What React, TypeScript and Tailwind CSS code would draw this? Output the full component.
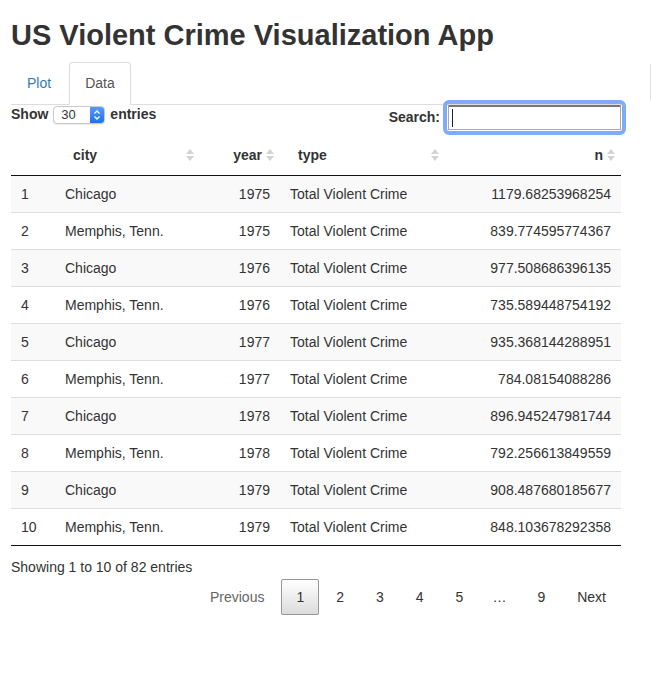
import React from 'react';

const rows = [
  ['1', 'Chicago', '1975', 'Total Violent Crime', '1179.68253968254'],
  ['2', 'Memphis, Tenn.', '1975', 'Total Violent Crime', '839.774595774367'],
  ['3', 'Chicago', '1976', 'Total Violent Crime', '977.508686396135'],
  ['4', 'Memphis, Tenn.', '1976', 'Total Violent Crime', '735.589448754192'],
  ['5', 'Chicago', '1977', 'Total Violent Crime', '935.368144288951'],
  ['6', 'Memphis, Tenn.', '1977', 'Total Violent Crime', '784.08154088286'],
  ['7', 'Chicago', '1978', 'Total Violent Crime', '896.945247981744'],
  ['8', 'Memphis, Tenn.', '1978', 'Total Violent Crime', '792.256613849559'],
  ['9', 'Chicago', '1979', 'Total Violent Crime', '908.487680185677'],
  ['10', 'Memphis, Tenn.', '1979', 'Total Violent Crime', '848.103678292358'],
];

function SortIcon() {
  return (
    <svg className="absolute right-[6px] top-[13px]" width="8" height="14" viewBox="0 0 8 14">
      <path d="M0 6 L4 1 L8 6 Z" fill="#d4d4d4" />
      <path d="M0 8 L4 13 L8 8 Z" fill="#d4d4d4" />
    </svg>
  );
}

function PageButton({ label, current }: { label: string; current?: boolean }) {
  return (
    <span
      className={
        current
          ? 'ml-[2px] px-[14px] py-[7px] leading-[20px] border border-[#979797] rounded-[2px] bg-gradient-to-b from-white to-[#dcdcdc] text-[#333]'
          : 'ml-[2px] px-[14px] py-[7px] leading-[20px] border border-transparent text-[#333]'
      }
    >
      {label}
    </span>
  );
}

export default function App() {
  return (
    <div className="relative min-h-[686px] bg-white text-[#333] text-[14px] font-['Liberation_Sans',Arial,sans-serif]">
      <div className="absolute left-[650px] top-[64px] h-[36px] w-px bg-[#e3e3e3]" />
      <div className="ml-[11px] w-[610px]">
        <h1 className="pt-[19px] text-[29px] font-bold leading-[33px] text-[#333]">
          US Violent Crime Visualization App
        </h1>

        {/* tabs */}
        <ul className="mt-[10px] flex border-b border-[#ddd]">
          <li className="mr-[2px] border border-transparent px-[15px] py-[10px] leading-[20px] text-[#337ab7]">Plot</li>
          <li className="-mb-px rounded-t-[4px] border border-[#ddd] border-b-white bg-white px-[15px] py-[10px] leading-[20px] text-[#555]">
            Data
          </li>
        </ul>

        {/* length + filter */}
        <div className="flex h-[25px] items-center justify-between">
          <div className="flex items-center font-bold text-[14px] -mt-[6px]">
            <span>Show</span>
            <div className="mx-[5px] flex h-[18px] w-[52px] items-center rounded-[4px] border border-[#c9c9c9] bg-white shadow-[0_1px_1px_rgba(0,0,0,0.08)] overflow-hidden">
              <span className="flex-1 pl-[7px] text-[13px] font-normal leading-[16px]">30</span>
              <span className="flex h-full w-[14px] items-center justify-center bg-gradient-to-b from-[#5599fa] to-[#1f6fef]">
                <svg width="8" height="12" viewBox="0 0 8 12">
                  <path d="M1.5 4.5 L4 2 L6.5 4.5" stroke="white" strokeWidth="1.3" fill="none" />
                  <path d="M1.5 7.5 L4 10 L6.5 7.5" stroke="white" strokeWidth="1.3" fill="none" />
                </svg>
              </span>
            </div>
            <span>entries</span>
          </div>
          <div className="flex items-center font-bold">
            <span className="mr-[8px]">Search:</span>
            <div className="relative h-[25px] w-[173px] rounded-[1px] border border-[#a9a9a9] border-t-[#777] border-t-2 bg-white outline outline-4 outline-offset-1 outline-[#80abf7]">
              <div className="absolute left-[3px] top-[2px] h-[18px] w-px bg-[#222]" />
            </div>
          </div>
        </div>

        {/* table */}
        <table className="mt-[5px] w-[610px] table-fixed border-collapse border-b border-[#111]">
          <colgroup>
            <col className="w-[44px]" />
            <col className="w-[145px]" />
            <col className="w-[80px]" />
            <col className="w-[165px]" />
            <col className="w-[176px]" />
          </colgroup>
          <thead>
            <tr className="border-b border-[#111]">
              <th className="py-[10px] pl-[10px] pr-[18px] leading-[20px]" />
              <th className="relative py-[10px] pl-[18px] pr-[18px] text-left font-bold leading-[20px]">
                city
                <SortIcon />
              </th>
              <th className="relative py-[10px] pl-[10px] pr-[18px] text-right font-bold leading-[20px]">
                year
                <SortIcon />
              </th>
              <th className="relative py-[10px] pl-[18px] pr-[18px] text-left font-bold leading-[20px]">
                type
                <SortIcon />
              </th>
              <th className="relative py-[10px] pl-[10px] pr-[18px] text-right font-bold leading-[20px]">
                n
                <SortIcon />
              </th>
            </tr>
          </thead>
          <tbody>
            {rows.map((r, i) => (
              <tr key={r[0]} className={i % 2 === 0 ? 'bg-[#f9f9f9]' : 'bg-white'}>
                <td className={(i > 0 ? 'border-t border-[#ddd] ' : '') + 'px-[10px] py-[8px] leading-[20px]'}>{r[0]}</td>
                <td className={(i > 0 ? 'border-t border-[#ddd] ' : '') + 'px-[10px] py-[8px] leading-[20px]'}>{r[1]}</td>
                <td className={(i > 0 ? 'border-t border-[#ddd] ' : '') + 'px-[10px] py-[8px] text-right leading-[20px]'}>{r[2]}</td>
                <td className={(i > 0 ? 'border-t border-[#ddd] ' : '') + 'px-[10px] py-[8px] leading-[20px]'}>{r[3]}</td>
                <td className={(i > 0 ? 'border-t border-[#ddd] ' : '') + 'px-[10px] py-[8px] text-right leading-[20px]'}>{r[4]}</td>
              </tr>
            ))}
          </tbody>
        </table>

        <div className="pt-[11px] leading-[20px]">Showing 1 to 10 of 82 entries</div>

        {/* pagination */}
        <div className="mt-[2px] flex items-center justify-end">
          <span className="ml-[2px] border border-transparent px-[14px] py-[7px] leading-[20px] text-[#666]">Previous</span>
          <PageButton label="1" current />
          <PageButton label="2" />
          <PageButton label="3" />
          <PageButton label="4" />
          <PageButton label="5" />
          <span className="px-[14px] leading-[20px]">…</span>
          <PageButton label="9" />
          <PageButton label="Next" />
        </div>
      </div>
    </div>
  );
}
